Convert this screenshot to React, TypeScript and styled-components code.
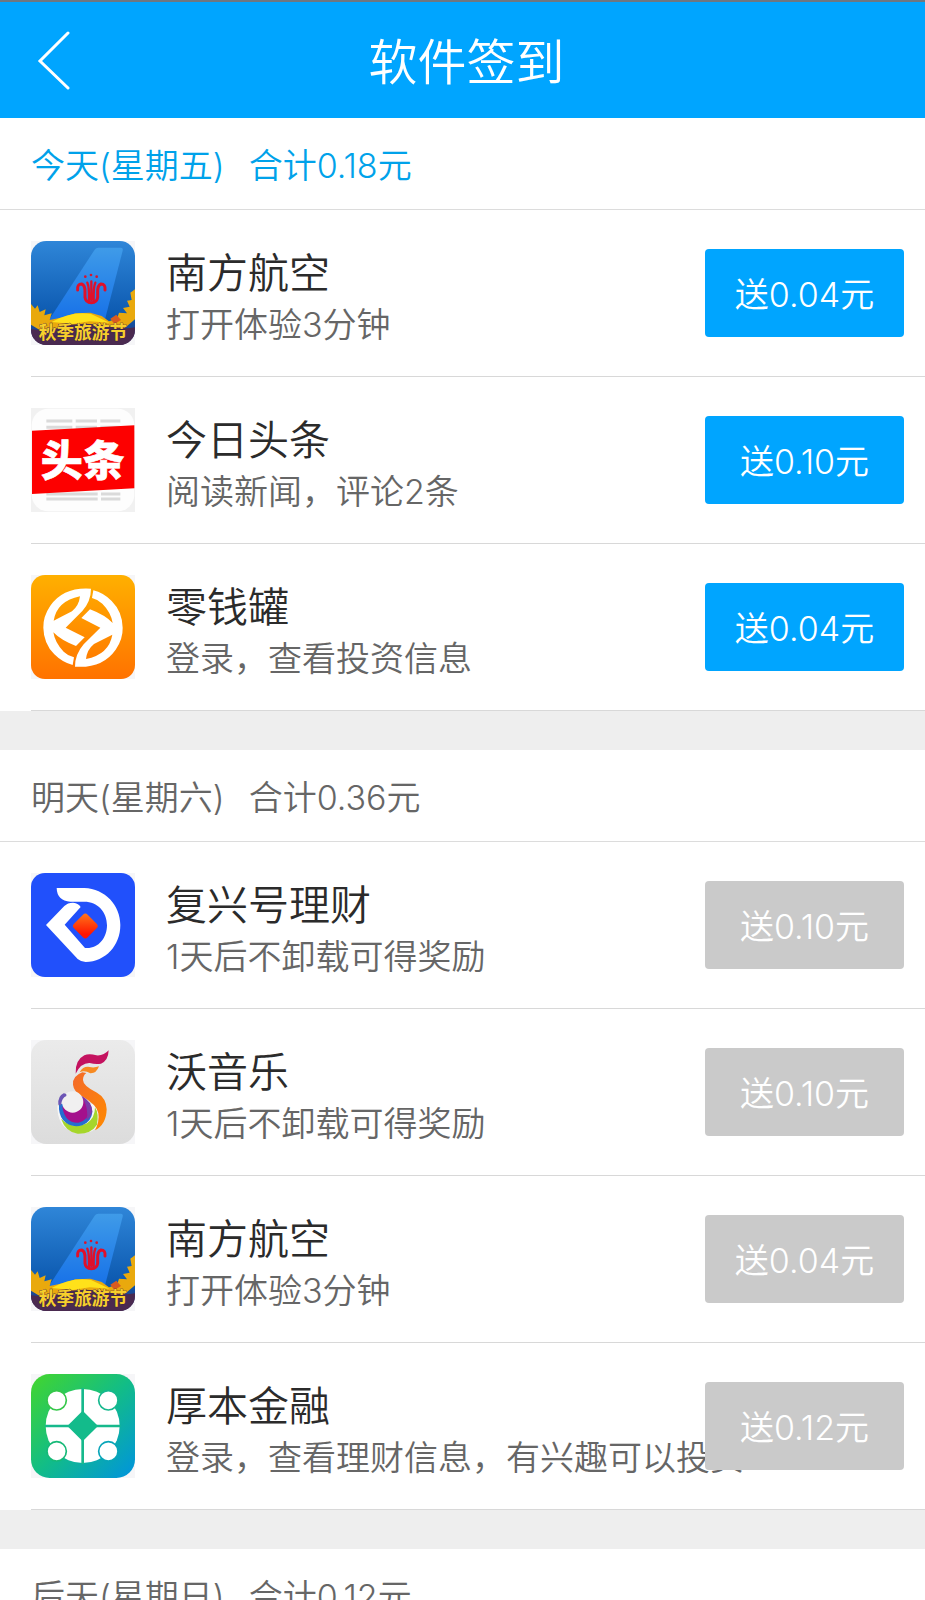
import React from "react";
import styled, { createGlobalStyle } from "styled-components";

const GlobalStyle = createGlobalStyle`
  * { box-sizing: border-box; }
  body {
    margin: 0;
    background: #fff;
    font-family: Inter, "Noto Sans CJK SC", sans-serif;
    font-weight: 350;
    -webkit-font-smoothing: antialiased;
  }
`;

const Screen = styled.div`
  display: flex;
  flex-direction: column;
  height: 100vh;
`;

const Header = styled.header`
  flex: none;
  display: grid;
  grid-template-columns: 108px 1fr 100px;
  align-items: center;
  height: 118px;
  border-top: 2px solid #6f7780;
  background: #00a5ff;
  color: #fff;
`;

const BackButton = styled.button`
  display: flex;
  align-items: center;
  height: 100%;
  padding: 0 0 0 36px;
  border: 0;
  background: none;
  color: inherit;
  cursor: pointer;
`;

const PageTitle = styled.h1`
  margin: 0;
  padding-top: 6px;
  font-size: 49px;
  line-height: 72px;
  font-weight: inherit;
  text-align: center;
`;

const Days = styled.main`
  flex: 1;
  min-height: 0;
  overflow-y: auto;
  scrollbar-width: none;
`;

const Day = styled.section`
  & + & {
    border-top: 39px solid #eee;
  }
`;

const DayHeading = styled.h2<{ $today?: boolean }>`
  display: flex;
  align-items: center;
  gap: 24px;
  height: 92px;
  margin: 0;
  padding: 4px 31px 0;
  border-bottom: 1px solid #dcdcdc;
  color: ${(p) => (p.$today ? "#00a2ea" : "#666")};
  font-size: 34px;
  line-height: 48px;
  font-weight: inherit;
  white-space: nowrap;
`;

const TaskList = styled.ul`
  margin: 0;
  padding: 0 0 0 31px;
  list-style: none;
`;

const Task = styled.li`
  display: flex;
  align-items: center;
  height: 167px;
  padding-right: 21px;
  border-bottom: 1px solid #d8d8d8;
`;

const AppIcon = styled.svg`
  flex: none;
  width: 104px;
  height: 104px;
  background: #f6f6f8;
`;

const TaskText = styled.div`
  flex: 1;
  min-width: 0;
  margin-left: 31px;
  padding-top: 8px;
  white-space: nowrap;
`;

const TaskName = styled.h3`
  margin: 0;
  color: #2b2b2b;
  font-size: 41px;
  line-height: 56px;
  font-weight: inherit;
`;

const TaskHint = styled.p`
  margin: 0;
  color: #666;
  font-size: 34px;
  line-height: 48px;
`;

const RewardButton = styled.button`
  position: relative;
  flex: none;
  width: 199px;
  height: 88px;
  padding: 4px 0 0;
  border: 0;
  border-radius: 4px;
  background: #00a5ff;
  color: #fff;
  font: inherit;
  font-size: 34px;
  line-height: 48px;
  cursor: pointer;

  &:disabled {
    background: #cacaca;
    cursor: default;
  }
`;

const AirlineIcon = () => (
  <AppIcon viewBox="34 19 312 312" aria-hidden="true">
    <defs>
      <linearGradient id="sky" x1="0" y1="0" x2="0" y2="1">
        <stop offset="0" stopColor="#2f86d8" />
        <stop offset="0.75" stopColor="#0b57ae" />
        <stop offset="1" stopColor="#3a2a62" />
      </linearGradient>
      <linearGradient id="tail" x1="0" y1="0" x2="0" y2="1">
        <stop offset="0" stopColor="#3f9be8" />
        <stop offset="1" stopColor="#1670e8" />
      </linearGradient>
      <clipPath id="airline-clip">
        <rect x="34" y="19" width="312" height="312" rx="46" />
      </clipPath>
    </defs>
    <g clipPath="url(#airline-clip)">
      <rect x="34" y="19" width="312" height="312" fill="url(#sky)" />
      <path d="M225 45Q229 39 236 39H304Q311 40 309 48L254 262H84Z" fill="url(#tail)" />
      <g fill="none" stroke="#e0102a" strokeWidth="9" strokeLinecap="round">
        <path d="M174 166Q172 148 186 148Q197 152 196 174V188Q198 204 215 204Q232 204 234 188V174Q233 152 244 148Q258 148 256 166" />
        <path d="M203 144Q209 156 208 198M227 144Q221 156 222 198M215 140V196" strokeWidth="7" />
      </g>
      <circle cx="197" cy="126" r="4" fill="#d9122c" />
      <circle cx="214" cy="121" r="4" fill="#d9122c" />
      <circle cx="231" cy="126" r="4" fill="#d9122c" />
      <path d="M34 208l12 14 8-10 6 20 18-8-4 18 22-6-6 20 40-8 38-12 44-2 34 10 22 16 24-8 6-18 24 2-12-16 20-4-8-18 14-2-4-22 16-12v90l-40 34H60L34 270z" fill="#e9a90d" />
      <path d="M96 262q60-34 118-24l56 26-60-4-50 8z" fill="#ffe11a" />
      <path d="M272 252l18-12 14 16-20 12z" fill="#d95a20" />
      <path d="M34 284q60 6 90-8 70-18 150 0 40 8 72 2v53H34z" fill="#4a2a50" />
      <text x="190" y="314" textAnchor="middle" fontSize="53" fontWeight="700" fill="#f7cf2c" stroke="#3c2340" strokeWidth="2" paintOrder="stroke">秋季旅游节</text>
    </g>
  </AppIcon>
);

const NewsIcon = () => (
  <AppIcon viewBox="34 26 312 312" aria-hidden="true">
    <rect x="34" y="26" width="312" height="312" fill="#f1f1f1" />
    <rect x="36" y="28" width="308" height="308" rx="50" fill="#fdfdfd" />
    <path d="M80 65h78M168 65h64M242 65h60M80 84h78M168 84h64M242 84h60M80 284h154M244 284h58M80 299h154M244 299h58" stroke="#dadada" strokeWidth="9" />
    <path d="M37 94L344 78V267L37 284Z" fill="#fd0000" />
    <text x="189" y="230" textAnchor="middle" fontSize="126" fontWeight="900" fill="#fff" stroke="#fff" strokeWidth="2">头条</text>
  </AppIcon>
);

const CoinJarIcon = () => (
  <AppIcon viewBox="34 30 312 312" aria-hidden="true">
    <defs>
      <linearGradient id="jar" x1="0" y1="0" x2="0" y2="1">
        <stop offset="0" stopColor="#ffb000" />
        <stop offset="1" stopColor="#ff7200" />
      </linearGradient>
      <g id="jar-half">
        <path fillRule="evenodd" d="M214 71Q132 65 92 122Q70 154 71 188Q72 236 104 268Q129 293 159 300L163 277Q144 272 132 260Q106 234 101 202Q124 226 169 243L195 217L138 188L188 138Q214 108 214 71ZM181 94Q178 122 157 139Q130 153 102 167Q112 108 181 94Z" />
      </g>
    </defs>
    <rect x="34" y="30" width="312" height="312" rx="42" fill="url(#jar)" />
    <g fill="#fff">
      <use href="#jar-half" />
      <use href="#jar-half" transform="rotate(180 190 188)" />
    </g>
  </AppIcon>
);

const FuxingIcon = () => (
  <AppIcon viewBox="34 33 312 312" aria-hidden="true">
    <defs>
      <linearGradient id="gem" x1="0" y1="0" x2="1" y2="1">
        <stop offset="0" stopColor="#ff7a1a" />
        <stop offset="0.8" stopColor="#ff1500" />
      </linearGradient>
    </defs>
    <rect x="34" y="33" width="312" height="312" rx="42" fill="#2150fb" />
    <path d="M111 78H194C256 80 302 130 302 189C302 250 258 299 198 300Q183 299 174 291L79 189L134 132Q144 122 160 122Q178 124 183 135L135 188L196 258C234 262 262 230 262 190C262 150 234 119 194 119H152Q112 116 111 78Z" fill="#fff" />
    <rect x="168" y="163" width="58" height="58" rx="10" transform="rotate(45 197 192)" fill="url(#gem)" />
  </AppIcon>
);

const MusicIcon = () => (
  <AppIcon viewBox="34 30 312 312" aria-hidden="true">
    <defs>
      <linearGradient id="plate" x1="0" y1="0" x2="0" y2="1">
        <stop offset="0" stopColor="#ebebeb" />
        <stop offset="1" stopColor="#dcdcdc" />
      </linearGradient>
      <linearGradient id="body" x1="0" y1="0" x2="1" y2="1">
        <stop offset="0" stopColor="#f46a2a" />
        <stop offset="1" stopColor="#ff8a00" />
      </linearGradient>
    </defs>
    <rect x="34" y="30" width="312" height="312" rx="46" fill="url(#plate)" />
    <path d="M113 226Q112 290 160 306Q214 318 240 284L240 210L150 250Z" fill="#f6f6f6" />
    <path d="M124 266Q160 300 202 280Q226 264 226 232Q238 250 232 284Q214 312 174 311Q138 306 124 266Z" fill="#a6d62b" />
    <path d="M188 127Q158 138 160 164Q162 184 186 198Q232 224 236 250Q240 274 226 301Q260 284 261 238Q260 204 232 188Q190 168 190 150Q190 136 200 129Z" fill="url(#body)" />
    <path d="M118 222Q116 252 130 270Q154 296 188 286Q216 274 218 246Q216 216 186 199L160 220Z" fill="#256fd0" />
    <path d="M128 230Q136 280 176 278Q208 270 212 236Q206 210 186 199L150 220Z" fill="#a4108c" />
    <path d="M186 199Q216 214 218 244Q214 262 200 272Q210 236 186 199Z" fill="#7d3aa8" />
    <circle cx="159" cy="216" r="32" fill="#f0f0f0" />
    <path d="M116 224Q114 198 132 190Q142 190 140 198Q126 204 124 226Z" fill="#6c55b5" />
    <path d="M168 131Q166 90 194 76Q208 70 230 76Q252 78 267 61Q266 92 244 101Q228 104 210 99Q184 98 168 131Z" fill="#c4125f" />
    <path d="M180 127Q190 108 210 111Q224 114 238 109Q230 131 212 130Q194 119 180 127Z" fill="#f78a22" />
  </AppIcon>
);

const HoubenIcon = () => (
  <AppIcon viewBox="34 36 312 312" aria-hidden="true">
    <defs>
      <linearGradient id="finance" x1="0" y1="0" x2="1" y2="1">
        <stop offset="0" stopColor="#44d62c" />
        <stop offset="0.5" stopColor="#12bd86" />
        <stop offset="1" stopColor="#0093df" />
      </linearGradient>
    </defs>
    <rect x="34" y="36" width="312" height="312" rx="56" fill="url(#finance)" />
    <circle cx="189" cy="192" r="111" fill="#fff" />
    <path d="M189 78V306M76 192H302" stroke="#17b98c" strokeWidth="8" />
    <path d="M189 146L235 192L189 238L143 192Z" fill="#13bb8b" />
    <g fill="#fff" strokeWidth="5">
      <circle cx="111" cy="115" r="29" stroke="#35c74a" />
      <circle cx="266" cy="115" r="29" stroke="#16b88e" />
      <circle cx="111" cy="268" r="29" stroke="#16b977" />
      <circle cx="266" cy="268" r="29" stroke="#08a5b8" />
    </g>
  </AppIcon>
);

type TaskItem = { name: string; hint: string; reward: string; Icon: React.FC };
type DayItem = { label: string; total: string; today?: boolean; tasks: TaskItem[] };

const airline: TaskItem = { name: "南方航空", hint: "打开体验3分钟", reward: "0.04", Icon: AirlineIcon };

const days: DayItem[] = [
  {
    label: "今天(星期五)",
    total: "0.18",
    today: true,
    tasks: [
      airline,
      { name: "今日头条", hint: "阅读新闻，评论2条", reward: "0.10", Icon: NewsIcon },
      { name: "零钱罐", hint: "登录，查看投资信息", reward: "0.04", Icon: CoinJarIcon },
    ],
  },
  {
    label: "明天(星期六)",
    total: "0.36",
    tasks: [
      { name: "复兴号理财", hint: "1天后不卸载可得奖励", reward: "0.10", Icon: FuxingIcon },
      { name: "沃音乐", hint: "1天后不卸载可得奖励", reward: "0.10", Icon: MusicIcon },
      airline,
      { name: "厚本金融", hint: "登录，查看理财信息，有兴趣可以投资", reward: "0.12", Icon: HoubenIcon },
    ],
  },
  { label: "后天(星期日)", total: "0.12", tasks: [] },
];

export default function App() {
  return (
    <Screen lang="zh-CN">
      <GlobalStyle />
      <Header>
        <BackButton type="button" aria-label="返回">
          <svg width="36" height="60" viewBox="0 0 36 60" fill="none" stroke="currentColor" strokeWidth="3" strokeLinecap="round">
            <path d="M32 3L4 31L32 58" />
          </svg>
        </BackButton>
        <PageTitle>软件签到</PageTitle>
      </Header>
      <Days>
        {days.map((day) => (
          <Day key={day.label}>
            <DayHeading $today={day.today}>
              <span>{day.label}</span>
              <span>合计{day.total}元</span>
            </DayHeading>
            <TaskList>
              {day.tasks.map(({ name, hint, reward, Icon }) => (
                <Task key={name}>
                  <Icon />
                  <TaskText>
                    <TaskName>{name}</TaskName>
                    <TaskHint>{hint}</TaskHint>
                  </TaskText>
                  <RewardButton type="button" disabled={!day.today}>
                    送{reward}元
                  </RewardButton>
                </Task>
              ))}
            </TaskList>
          </Day>
        ))}
      </Days>
    </Screen>
  );
}
